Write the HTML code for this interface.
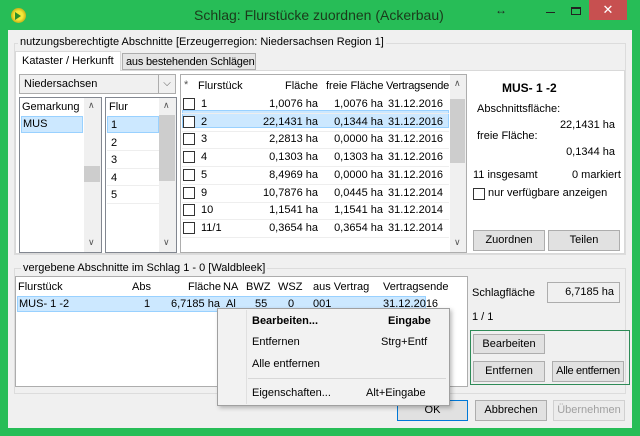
<!DOCTYPE html>
<html><head><meta charset="utf-8"><style>
*{box-sizing:border-box;margin:0;padding:0}
body{width:640px;height:436px;background:#27bd57;font-family:"Liberation Sans",sans-serif;font-size:11px;color:#000;position:relative;overflow:hidden}
.a{position:absolute;white-space:nowrap}
.box{position:absolute;border:1px solid #adadad;background:#fff}
.btn{position:absolute;border:1px solid #adadad;background:#e1e1e1;text-align:center;line-height:18px}
.cb{position:absolute;width:12px;height:12px;border:1px solid #333;background:#fff}
.r{text-align:right}
.sel{position:absolute;background:#cce8ff;border:1px solid #99d1ff}
.sb{position:absolute;background:#f0f0f0}
.th{position:absolute;background:#cdcdcd}
</style></head><body>
<!-- title bar -->
<div class="a" style="left:11px;top:8px;width:15px;height:15px;border-radius:50%;background:radial-gradient(circle,#f4e83a 40%,#c9b416 70%,#8f8a2c)"></div>
<div class="a" style="left:15px;top:12px;width:0;height:0;border-left:6px solid #2b8f2b;border-top:4px solid transparent;border-bottom:4px solid transparent"></div>
<div class="a" style="left:194px;top:7px;font-size:14px;color:#1b3a1b">Schlag: Flurstücke zuordnen (Ackerbau)</div>
<div class="a" style="left:495px;top:3px;font-size:12px;color:#222">↔</div>
<div class="a" style="left:546px;top:12px;width:9px;height:1px;background:#222"></div>
<div class="a" style="left:571px;top:7px;width:10px;height:8px;border:1px solid #222;border-top-width:2px"></div>
<div class="a" style="left:589px;top:0;width:38px;height:20px;background:#c75050;color:#fff;text-align:center;font-size:13px;line-height:20px">✕</div>
<!-- client -->
<div class="a" style="left:8px;top:30px;width:624px;height:398px;background:#f0f0f0"></div>
<!-- group 1 -->
<div class="a" style="left:14px;top:43px;width:612px;height:212px;border:1px solid #dcdcdc"></div>
<div class="a" style="left:18px;top:36px;background:#f0f0f0;padding:0 2px">nutzungsberechtigte Abschnitte [Erzeugerregion: Niedersachsen Region 1]</div>
<div class="a" style="left:15px;top:70px;width:610px;height:184px;border:1px solid #d9d9d9;background:#fff"></div>
<div class="a" style="left:15px;top:51px;width:106px;height:20px;border:1px solid #d9d9d9;border-bottom:none;background:#fff;padding:3px 0 0 6px">Kataster / Herkunft</div>
<div class="a" style="left:122px;top:53px;width:134px;height:17px;border:1px solid #adadad;background:#e5e5e5;padding:2px 0 0 3px;letter-spacing:-0.2px">aus bestehenden Schlägen</div>
<!-- combo -->
<div class="box" style="left:19px;top:74px;width:157px;height:20px;border-color:#adadad;background:#f0f0f0;padding:3px 4px">Niedersachsen</div>
<div class="a" style="left:158px;top:75px;width:17px;height:18px;border-left:1px solid #adadad;color:#555;text-align:center;font-size:10px;line-height:18px">⌵</div>
<!-- Gemarkung -->
<div class="box" style="left:19px;top:97px;width:83px;height:156px;border-color:#828790"></div>
<div class="a" style="left:22px;top:101px">Gemarkung</div>
<div class="sel" style="left:21px;top:116px;width:62px;height:17px"></div>
<div class="a" style="left:23px;top:118px">MUS</div>
<div class="sb" style="left:84px;top:98px;width:17px;height:154px"></div>
<div class="th" style="left:84px;top:166px;width:16px;height:16px"></div>
<div class="a" style="left:88px;top:100px;font-size:9px;color:#555">∧</div>
<div class="a" style="left:88px;top:237px;font-size:9px;color:#555">∨</div>
<!-- Flur -->
<div class="box" style="left:105px;top:97px;width:72px;height:156px;border-color:#828790"></div>
<div class="a" style="left:109px;top:101px">Flur</div>
<div class="sel" style="left:107px;top:116px;width:52px;height:17px"></div>
<div class="a" style="left:111px;top:119px">1</div>
<div class="a" style="left:111px;top:137px">2</div>
<div class="a" style="left:111px;top:154px">3</div>
<div class="a" style="left:111px;top:172px">4</div>
<div class="a" style="left:111px;top:189px">5</div>
<div class="a" style="left:107px;top:150px;width:52px;height:1px;background:#eee"></div>
<div class="a" style="left:107px;top:168px;width:52px;height:1px;background:#eee"></div>
<div class="a" style="left:107px;top:185px;width:52px;height:1px;background:#eee"></div>
<div class="a" style="left:107px;top:203px;width:52px;height:1px;background:#eee"></div>
<div class="sb" style="left:159px;top:98px;width:17px;height:154px"></div>
<div class="th" style="left:159px;top:115px;width:16px;height:66px"></div>
<div class="a" style="left:163px;top:100px;font-size:9px;color:#555">∧</div>
<div class="a" style="left:163px;top:237px;font-size:9px;color:#555">∨</div>
<!-- Flurstück grid -->
<div class="box" style="left:180px;top:74px;width:287px;height:179px;border-color:#adadad"></div>
<div class="a" style="left:184px;top:79px;color:#555">*</div>
<div class="a" style="left:198px;top:80px">Flurstück</div>
<div class="a r" style="left:260px;top:80px;width:58px">Fläche</div>
<div class="a" style="left:326px;top:80px">freie Fläche</div>
<div class="a" style="left:386px;top:80px;letter-spacing:-0.2px">Vertragsende</div>
<div class="sb" style="left:450px;top:75px;width:16px;height:177px"></div>
<div class="th" style="left:450px;top:99px;width:15px;height:64px"></div>
<div class="a" style="left:454px;top:78px;font-size:9px;color:#555">∧</div>
<div class="a" style="left:454px;top:237px;font-size:9px;color:#555">∨</div>
<div class="sel" style="left:182px;top:110px;width:267px;height:18px"></div>
<div id="rows"></div>
<!-- right panel -->
<div class="a" style="left:502px;top:81px;font-weight:bold;font-size:12px">MUS- 1 -2</div>
<div class="a" style="left:477px;top:103px">Abschnittsfläche:</div>
<div class="a r" style="left:540px;top:119px;width:75px">22,1431 ha</div>
<div class="a" style="left:477px;top:130px">freie Fläche:</div>
<div class="a r" style="left:540px;top:146px;width:75px">0,1344 ha</div>
<div class="a" style="left:473px;top:169px">11 insgesamt</div>
<div class="a" style="left:572px;top:169px">0 markiert</div>
<div class="cb" style="left:473px;top:188px;border-color:#333"></div>
<div class="a" style="left:488px;top:187px">nur verfügbare anzeigen</div>
<div class="btn" style="left:473px;top:230px;width:72px;height:21px">Zuordnen</div>
<div class="btn" style="left:548px;top:230px;width:72px;height:21px">Teilen</div>
<!-- group 2 -->
<div class="a" style="left:14px;top:268px;width:612px;height:126px;border:1px solid #dcdcdc"></div>
<div class="a" style="left:21px;top:262px;background:#f0f0f0;padding:0 2px">vergebene Abschnitte im Schlag 1 - 0 [Waldbleek]</div>
<div class="box" style="left:15px;top:276px;width:453px;height:111px;border-color:#adadad"></div>
<div class="a" style="left:18px;top:281px">Flurstück</div>
<div class="a" style="left:132px;top:281px">Abs</div>
<div class="a" style="left:188px;top:281px">Fläche</div>
<div class="a" style="left:223px;top:281px">NA</div>
<div class="a" style="left:246px;top:281px">BWZ</div>
<div class="a" style="left:278px;top:281px">WSZ</div>
<div class="a" style="left:313px;top:281px">aus Vertrag</div>
<div class="a" style="left:383px;top:281px">Vertragsende</div>
<div class="sel" style="left:17px;top:296px;width:409px;height:16px"></div>
<div class="a" style="left:19px;top:298px">MUS- 1 -2</div>
<div class="a" style="left:144px;top:298px">1</div>
<div class="a" style="left:171px;top:298px">6,7185 ha</div>
<div class="a" style="left:226px;top:298px">Al</div>
<div class="a" style="left:255px;top:298px">55</div>
<div class="a" style="left:288px;top:298px">0</div>
<div class="a" style="left:313px;top:298px">001</div>
<div class="a" style="left:383px;top:298px">31.12.2016</div>
<div class="a" style="left:472px;top:287px">Schlagfläche</div>
<div class="box" style="left:547px;top:282px;width:73px;height:21px;background:#f0f0f0;text-align:right;padding:3px 5px">6,7185 ha</div>
<div class="a" style="left:472px;top:311px">1 / 1</div>
<div class="a" style="left:470px;top:330px;width:160px;height:55px;border:1px solid #2e8b57"></div>
<div class="btn" style="left:473px;top:334px;width:72px;height:20px">Bearbeiten</div>
<div class="btn" style="left:473px;top:361px;width:72px;height:21px">Entfernen</div>
<div class="btn" style="left:552px;top:361px;width:72px;height:21px;font-size:11px;letter-spacing:-0.3px">Alle entfernen</div>
<!-- bottom buttons -->
<div class="btn" style="left:397px;top:400px;width:71px;height:21px;border-color:#0078d7">OK</div>
<div class="btn" style="left:475px;top:400px;width:72px;height:21px">Abbrechen</div>
<div class="btn" style="left:553px;top:400px;width:72px;height:21px;background:#ececec;border-color:#d0d0d0;color:#a0a0a0">Übernehmen</div>
<!-- context menu -->
<div class="a" style="left:219px;top:310px;width:233px;height:98px;background:rgba(0,0,0,0.25);filter:blur(2px)"></div>
<div class="a" style="left:217px;top:308px;width:233px;height:98px;background:#f2f2f2;border:1px solid #a0a0a0"></div>
<div class="a" style="left:246px;top:310px;width:1px;height:94px;background:#e0e0e0"></div>
<div class="a" style="left:252px;top:315px;font-weight:bold">Bearbeiten...</div>
<div class="a" style="left:388px;top:315px;font-weight:bold">Eingabe</div>
<div class="a" style="left:252px;top:336px">Entfernen</div>
<div class="a" style="left:381px;top:336px">Strg+Entf</div>
<div class="a" style="left:252px;top:358px">Alle entfernen</div>
<div class="a" style="left:248px;top:378px;width:198px;height:1px;background:#d7d7d7"></div>
<div class="a" style="left:252px;top:387px">Eigenschaften...</div>
<div class="a" style="left:366px;top:387px">Alt+Eingabe</div>
<script>
var d=[["1","1,0076","1,0076","2016"],["2","22,1431","0,1344","2016"],["3","2,2813","0,0000","2016"],["4","0,1303","0,1303","2016"],["5","8,4969","0,0000","2016"],["9","10,7876","0,0445","2014"],["10","1,1541","1,1541","2014"],["11/1","0,3654","0,3654","2014"]];
var h="";d.forEach(function(r,i){var y=96+i*17.7;
h+='<div class="cb" style="left:183px;top:'+(y+2)+'px"></div>';
h+='<div class="a" style="left:201px;top:'+(y+2)+'px">'+r[0]+'</div>';
h+='<div class="a r" style="left:250px;top:'+(y+2)+'px;width:68px">'+r[1]+' ha</div>';
h+='<div class="a r" style="left:316px;top:'+(y+2)+'px;width:67px">'+r[2]+' ha</div>';
h+='<div class="a" style="left:388px;top:'+(y+2)+'px">31.12.'+r[3]+'</div>';
h+='<div class="a" style="left:182px;top:'+(y+17)+'px;width:267px;height:1px;background:#eee"></div>';});
document.getElementById("rows").outerHTML=h;
</script>
</body></html>
